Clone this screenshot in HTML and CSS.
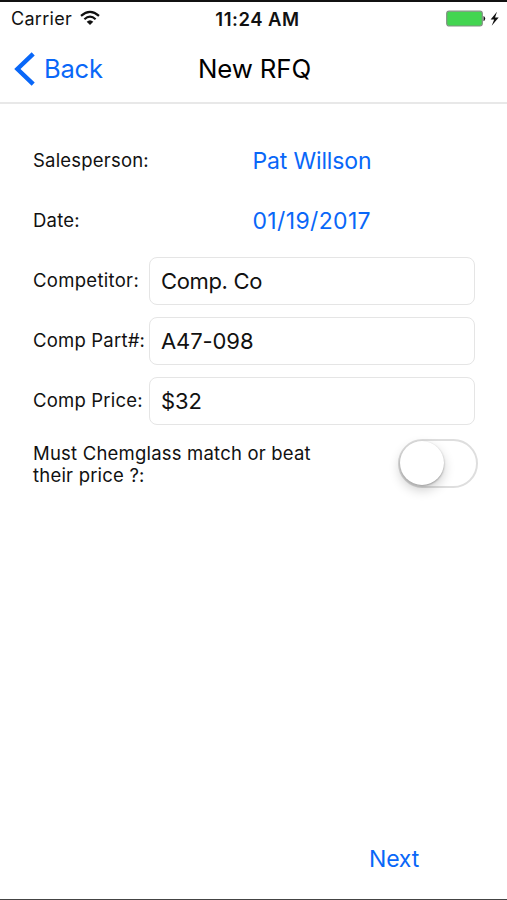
FILE: index.html
```html
<!DOCTYPE html>
<html lang="en">
<head>
<meta charset="utf-8">
<title>New RFQ</title>
<link rel="stylesheet" href="styles.css">
</head>
<body>
<div class="screen">
  <header class="status">
    <div class="carrier"><span class="carrier-name">Carrier</span>
      <svg class="wifi" width="20" height="16" viewBox="0 0 20 16" fill="none" stroke="#111" stroke-width="2.2"><path d="M1 5.8Q10-2.1 19 5.8M4.4 9.2Q10 4.1 15.6 9.2"/><path d="M6.7 11.7Q10 8.7 13.3 11.7L10 15Z" fill="#111" stroke="none"/></svg>
    </div>
    <div class="clock">11:24 AM</div>
    <div class="power">
      <svg width="54" height="18" viewBox="0 0 54 18"><rect x=".7" y="1.2" width="35.6" height="14.8" rx="2.4" fill="#43d551" stroke="#829184" stroke-width="1.2"/><path d="M37.5 6Q39.2 6.5 39.2 8.6T37.5 11.2Z" fill="#111"/><path d="M51 1.8L44.6 9.5H48.2L45.7 15.8L52.7 7.4H49Z" fill="#111"/></svg>
    </div>
  </header>
  <nav class="nav">
    <a class="back"><svg width="22" height="34" viewBox="0 0 22 34" fill="none" stroke="#0967f8" stroke-width="4.4"><path d="M19.2 1.8L3.4 17L19.2 32.2"/></svg><span class="back-label">Back</span></a>
    <h1 class="title">New RFQ</h1>
  </nav>
  <main class="form">
    <div class="row"><span class="label salesperson">Salesperson:</span><a class="link person">Pat Willson</a></div>
    <div class="row"><span class="label date-label">Date:</span><a class="link date">01/19/2017</a></div>
    <div class="row"><span class="label competitor">Competitor:</span><div class="field"><span class="company">Comp. Co</span></div></div>
    <div class="row"><span class="label part-label">Comp Part#:</span><div class="field"><span class="part">A47-098</span></div></div>
    <div class="row"><span class="label price-label">Comp Price:</span><div class="field"><span class="price">$32</span></div></div>
    <div class="match"><p class="question">Must Chemglass match or beat<br>their price ?:</p><div class="switch"><div class="knob"></div></div></div>
  </main>
  <footer class="footer"><a class="next">Next</a></footer>
</div>
</body>
</html>
```

FILE: styles.css
```css
* { box-sizing: border-box; }
body { margin: 0; background: #fff; color: #111; font-family: Inter, "Liberation Sans", sans-serif; }
.screen { height: 900px; display: flex; flex-direction: column; border-top: 2px solid #111; border-bottom: 1px solid #444; }
.status { height: 32px; display: grid; grid-template-columns: 1fr auto 1fr; align-items: center; padding: 1px 7px 0 11px; font-size: 18px; line-height: 32px; }
.carrier { display: flex; align-items: center; gap: 8px; }
.carrier-name { letter-spacing: .3px; }
.wifi { margin-top: -3px; }
.clock { font-weight: 600; font-size: 18.5px; letter-spacing: .5px; margin-left: 4px; }
.power { display: flex; justify-content: flex-end; }
.nav { height: 70px; flex: none; display: grid; grid-template-columns: 1fr auto 1fr; align-items: center; padding: 1px 0 0 14px; border-bottom: 2px solid #e8e8e8; color: #000; }
.back { display: flex; align-items: center; gap: 8px; color: #0967f8; font-size: 25.5px; letter-spacing: -.2px; }
.title { margin: 0 0 0 -12px; font-size: 25.8px; font-weight: 400; letter-spacing: -.1px; }
.form { flex: 1; padding: 27px 29px 0 33px; }
.row { height: 60px; display: flex; align-items: center; padding-right: 3px; }
.label { width: 116px; flex: none; padding-bottom: 2px; font-size: 18.5px; white-space: nowrap; letter-spacing: .2px; }
.competitor { letter-spacing: .3px; }
.link { margin-left: 103.5px; padding-bottom: 1px; color: #0967f8; font-size: 23px; white-space: nowrap; }
.person { letter-spacing: -.15px; }
.date { letter-spacing: .35px; }
.field { flex: 1; height: 48px; display: flex; align-items: center; padding: 0 0 1px 11px; border: 1.5px solid #e5e5e5; border-radius: 8px; font-size: 22px; }
.company { letter-spacing: -.35px; }
.part, .price { letter-spacing: -.1px; }
.match { display: flex; justify-content: space-between; padding-top: 8px; }
.question { margin: 3px 0 0; font-size: 18.5px; line-height: 22px; letter-spacing: .2px; white-space: nowrap; }
.switch { width: 80px; height: 49px; flex: none; border: 2.5px solid #dedede; border-radius: 25px; }
.knob { width: 44px; height: 44px; border-radius: 50%; background: #fff; box-shadow: 0 1px 2px #999, 0 5px 12px #0003; }
.footer { height: 79px; padding: 23px 0 0 369px; color: #0967f8; font-size: 23px; line-height: 32px; letter-spacing: -.2px; }
```
